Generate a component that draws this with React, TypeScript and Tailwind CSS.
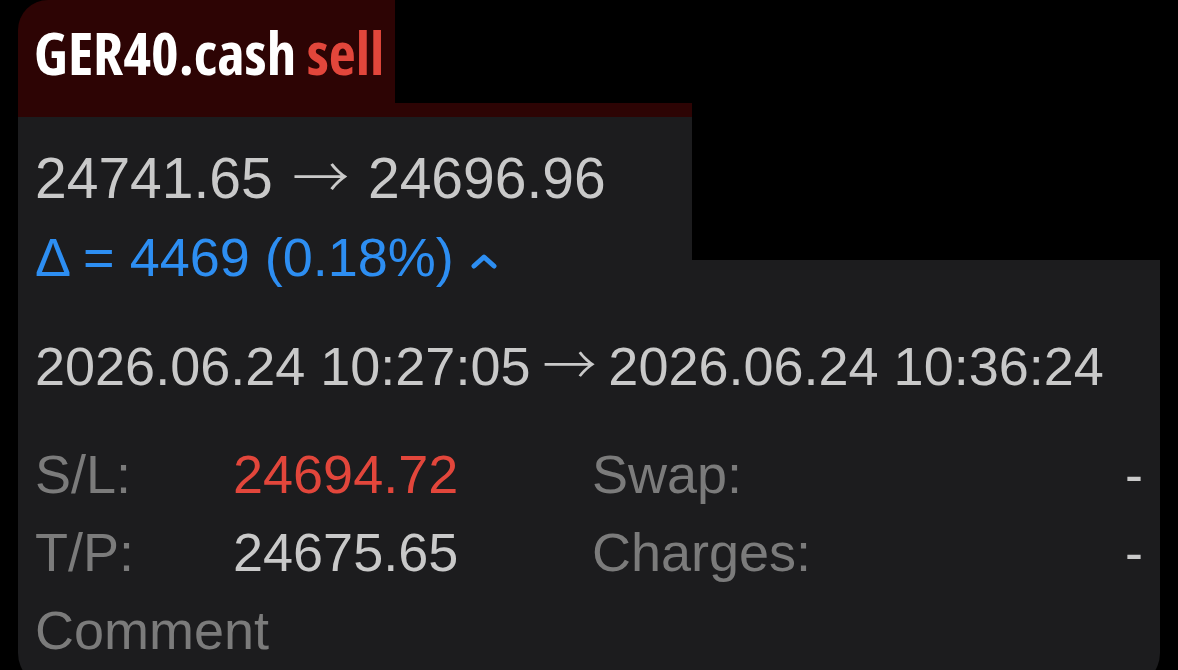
import React from 'react';

const tradeInfo = {
  symbol: 'GER40.cash',
  side: 'sell',
  openPrice: '24741.65',
  closePrice: '24696.96',
  delta: 'Δ = 4469 (0.18%)',
  openTime: '2026.06.24 10:27:05',
  closeTime: '2026.06.24 10:36:24',
  sl: '24694.72',
  tp: '24675.65',
};

const Arrow = ({ className = '' }: { className?: string }) => (
  <span className={`font-['Noto_Sans_CJK_SC','Liberation_Sans',sans-serif] font-light leading-[0] text-[#c9c9c9] ${className}`}> → </span>
);

export default function App() {
  return (
    <div className="w-[1178px] h-[670px] overflow-hidden bg-black pl-[18px] font-['Liberation_Sans',Arial,sans-serif]">
      {/* header tab */}
      <div className="flex w-[674px] h-[117px]">
        <div className="w-[377px] h-full bg-[#2d0404] rounded-tl-[30px] pl-[16px] pt-[16px] whitespace-nowrap">
          <span className="font-['Open_Sans',sans-serif] font-bold font-stretch-condensed text-[59px] leading-[72px] text-white">
            {tradeInfo.symbol} <span className="text-[#e2463b]">{tradeInfo.side}</span>
          </span>
        </div>
        <div className="flex-1 flex flex-col">
          <div className="flex-1" />
          <div className="h-[14px] bg-[#2d0404]" />
        </div>
      </div>

      {/* card */}
      <div className="w-[1142px] h-[570px] bg-[#1c1c1e] rounded-b-[34px]">
        <div className="flex">
          <div className="w-[674px] pl-[17px] pt-[21px]">
            <div className="text-[57px] leading-[80px] text-[#c9c9c9] whitespace-nowrap">
              {tradeInfo.openPrice}<Arrow className="ml-[7px] mr-[6px]" />{tradeInfo.closePrice}
            </div>
            <div className="flex items-center text-[54px] leading-[78px] text-[#2d8ef2] whitespace-nowrap">
              <span>{tradeInfo.delta}</span>
              <svg className="ml-[16px] mt-[8px]" width="28" height="18" viewBox="0 0 28 18" fill="none">
                <polyline points="4,14 14,5 24,14" stroke="#2d8ef2" strokeWidth="5" strokeLinecap="round" strokeLinejoin="round" />
              </svg>
            </div>
          </div>
          <div className="flex-1 h-[143px] bg-black" />
        </div>

        <div className="pl-[17px] pr-[17px] mt-[31px] text-[54px] leading-[78px]">
          <div className="text-[#c9c9c9] whitespace-nowrap">
            {tradeInfo.openTime}<Arrow />{tradeInfo.closeTime}
          </div>

          <div className="mt-[30px] flex">
            <div className="w-[198px] text-[#7b7b7b]">S/L:</div>
            <div className="w-[359px] text-[#e2463b]">{tradeInfo.sl}</div>
            <div className="flex-1 text-[#7b7b7b]">Swap:</div>
            <div className="text-[#c9c9c9]">-</div>
          </div>
          <div className="flex">
            <div className="w-[198px] text-[#7b7b7b]">T/P:</div>
            <div className="w-[359px] text-[#c9c9c9]">{tradeInfo.tp}</div>
            <div className="flex-1 text-[#7b7b7b]">Charges:</div>
            <div className="text-[#c9c9c9]">-</div>
          </div>
          <div className="text-[#7b7b7b]">Comment</div>
        </div>
      </div>
    </div>
  );
}
